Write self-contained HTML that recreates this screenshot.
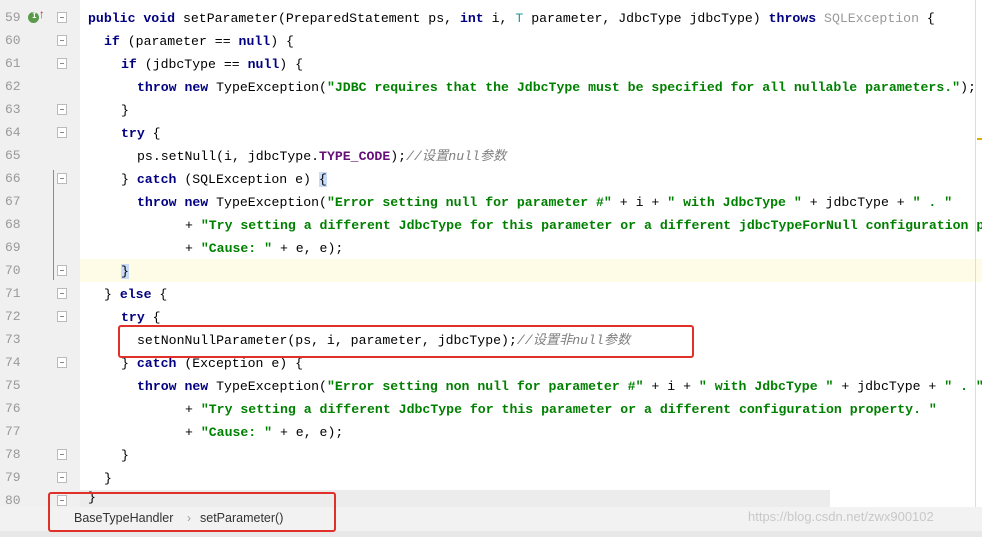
<!DOCTYPE html>
<html><head><meta charset="utf-8"><style>
body{margin:0;width:982px;height:537px;overflow:hidden;background:#fff;position:relative;font-family:"Liberation Mono","Noto Sans CJK SC",monospace;}
.wrap{position:absolute;left:0;top:0;width:982px;height:537px;overflow:hidden;}
.gut{position:absolute;left:0;top:0;width:80px;height:507px;background:#f0f0f0;}
.ln{position:absolute;left:5px;width:20px;font-size:13px;color:#999;font-family:"Liberation Mono",monospace;}
.fold{position:absolute;left:57px;width:10px;height:11px;border:1px solid #bbb;background:#fff;box-sizing:border-box;}
.fold:after{content:"";position:absolute;left:2px;top:4px;width:4px;height:1px;background:#888;}
.l{position:absolute;height:23px;line-height:23px;font-size:13.2px;white-space:pre;color:#000;}
.k{color:#000080;font-weight:bold}
.s{color:#008000;font-weight:bold}
.c{color:#808080;font-style:italic}
.p{color:#660e7a;font-weight:bold}
.r{position:absolute;border:2.5px solid #e0302a;border-radius:3px;box-sizing:border-box;}
.a{left:88px}.b{left:104px}.cc{left:121px}.d{left:137px}.e{left:185px}
</style></head><body><div class="wrap">
<div class="gut"></div>
<div style="position:absolute;left:80px;top:259px;width:902px;height:23px;background:#fefbe6"></div>
<div style="position:absolute;left:80px;top:490px;width:750px;height:17px;background:#ececec"></div>
<div style="position:absolute;left:0;top:507px;width:982px;height:24px;background:#f2f2f2;border-bottom:1px solid #ccc"></div>
<div style="position:absolute;left:0;top:531px;width:982px;height:6px;background:#e8e8e8"></div>
<div style="position:absolute;left:53px;top:170px;width:1px;height:110px;background:#6b8fd6"></div>
<div style="position:absolute;left:975px;top:0;width:1px;height:507px;background:#ddd"></div>
<div style="position:absolute;left:977px;top:138px;width:5px;height:2px;background:#e0b000"></div>
<div style="position:absolute;left:28px;top:12px;width:11px;height:11px;border-radius:50%;background:#5a9a4a"></div>
<div style="position:absolute;left:32px;top:12px;font-size:8px;color:#fff;font-weight:bold">I</div>
<div style="position:absolute;left:38px;top:8px;color:#c03030;font-size:12px">↑</div>

<div class="ln" style="top:10px">59</div><div class="ln" style="top:33px">60</div><div class="ln" style="top:56px">61</div><div class="ln" style="top:79px">62</div><div class="ln" style="top:102px">63</div><div class="ln" style="top:125px">64</div><div class="ln" style="top:148px">65</div><div class="ln" style="top:171px">66</div><div class="ln" style="top:194px">67</div><div class="ln" style="top:217px">68</div><div class="ln" style="top:240px">69</div><div class="ln" style="top:263px">70</div><div class="ln" style="top:286px">71</div><div class="ln" style="top:309px">72</div><div class="ln" style="top:332px">73</div><div class="ln" style="top:355px">74</div><div class="ln" style="top:378px">75</div><div class="ln" style="top:401px">76</div><div class="ln" style="top:424px">77</div><div class="ln" style="top:447px">78</div><div class="ln" style="top:470px">79</div><div class="ln" style="top:493px">80</div>

<div class="fold" style="top:12px"></div><div class="fold" style="top:35px"></div><div class="fold" style="top:58px"></div><div class="fold" style="top:104px"></div><div class="fold" style="top:127px"></div><div class="fold" style="top:173px"></div><div class="fold" style="top:265px"></div><div class="fold" style="top:288px"></div><div class="fold" style="top:311px"></div><div class="fold" style="top:357px"></div><div class="fold" style="top:449px"></div><div class="fold" style="top:472px"></div><div class="fold" style="top:495px"></div>

<div class="l a" style="top:7px"><span class="k">public void</span> setParameter(PreparedStatement ps, <span class="k">int</span> i, <span style="color:#20999d">T</span> parameter, JdbcType jdbcType) <span class="k">throws</span> <span style="color:#999">SQLException</span> {</div>
<div class="l b" style="top:30px"><span class="k">if</span> (parameter == <span class="k">null</span>) {</div>
<div class="l cc" style="top:53px"><span class="k">if</span> (jdbcType == <span class="k">null</span>) {</div>
<div class="l d" style="top:76px"><span class="k">throw new</span> TypeException(<span class="s">"JDBC requires that the JdbcType must be specified for all nullable parameters."</span>);</div>
<div class="l cc" style="top:99px">}</div>
<div class="l cc" style="top:122px"><span class="k">try</span> {</div>
<div class="l d" style="top:145px">ps.setNull(i, jdbcType.<span class="p">TYPE_CODE</span>);<span class="c">//设置null参数</span></div>
<div class="l cc" style="top:168px">} <span class="k">catch</span> (SQLException e) <span style="background:#c8dcf8">{</span></div>
<div class="l d" style="top:191px"><span class="k">throw new</span> TypeException(<span class="s">"Error setting null for parameter #"</span> + i + <span class="s">" with JdbcType "</span> + jdbcType + <span class="s">" . "</span></div>
<div class="l e" style="top:214px">+ <span class="s">"Try setting a different JdbcType for this parameter or a different jdbcTypeForNull configuration property. "</span></div>
<div class="l e" style="top:237px">+ <span class="s">"Cause: "</span> + e, e);</div>
<div class="l cc" style="top:260px"><span style="background:#c8dcf8">}</span></div>
<div class="l b" style="top:283px">} <span class="k">else</span> {</div>
<div class="l cc" style="top:306px"><span class="k">try</span> {</div>
<div class="l d" style="top:329px">setNonNullParameter(ps, i, parameter, jdbcType);<span class="c">//设置非null参数</span></div>
<div class="l cc" style="top:352px">} <span class="k">catch</span> (Exception e) {</div>
<div class="l d" style="top:375px"><span class="k">throw new</span> TypeException(<span class="s">"Error setting non null for parameter #"</span> + i + <span class="s">" with JdbcType "</span> + jdbcType + <span class="s">" . "</span></div>
<div class="l e" style="top:398px">+ <span class="s">"Try setting a different JdbcType for this parameter or a different configuration property. "</span></div>
<div class="l e" style="top:421px">+ <span class="s">"Cause: "</span> + e, e);</div>
<div class="l cc" style="top:444px">}</div>
<div class="l b" style="top:467px">}</div>
<div class="l a" style="top:488px;height:19px;line-height:19px;overflow:hidden">}</div>

<div style="position:absolute;left:74px;top:511px;font-family:'Liberation Sans',sans-serif;font-size:12.5px;color:#333">BaseTypeHandler</div>
<div style="position:absolute;left:187px;top:511px;font-family:'Liberation Sans',sans-serif;font-size:12px;color:#999">›</div>
<div style="position:absolute;left:200px;top:511px;font-family:'Liberation Sans',sans-serif;font-size:12.5px;color:#333">setParameter()</div>
<div style="position:absolute;left:748px;top:509px;font-family:'Liberation Sans',sans-serif;font-size:13px;color:#c8c8c8">https://blog.csdn.net/zwx900102</div>

<div class="r" style="left:118px;top:325px;width:576px;height:33px"></div>
<div class="r" style="left:48px;top:492px;width:288px;height:40px"></div>
</div></body></html>
